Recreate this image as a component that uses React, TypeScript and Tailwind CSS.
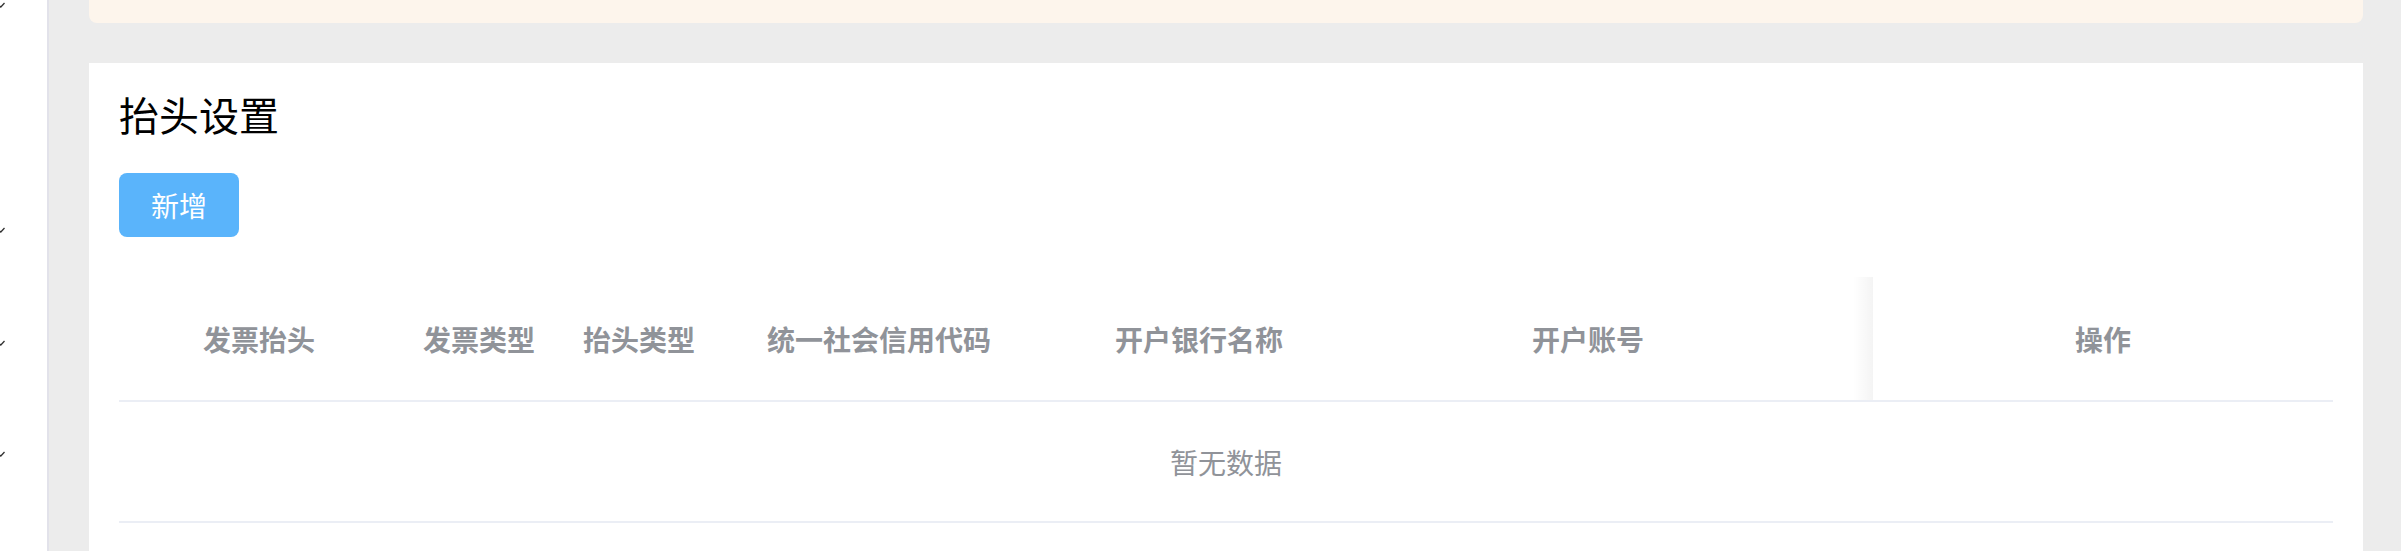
import React from "react";

const cjk = { fontFamily: '"Noto Sans CJK SC", "Noto Sans", sans-serif' };

function Tick() {
  return (
    <svg width="6" height="6" viewBox="0 0 6 6" className="block">
      <polyline points="-1,3.5 0.8,5 4.5,1" fill="none" stroke="#333" strokeWidth="1.3" />
    </svg>
  );
}

export default function App() {
  const cols: { label: string; w: string }[] = [
    { label: "发票抬头", w: "w-[280px]" },
    { label: "发票类型", w: "w-[160px]" },
    { label: "抬头类型", w: "w-[160px]" },
    { label: "统一社会信用代码", w: "w-[320px]" },
    { label: "开户银行名称", w: "w-[320px]" },
    { label: "开户账号", w: "w-[458px]" },
  ];
  return (
    <div className="flex w-[2401px] h-[551px] overflow-hidden" style={cjk}>
      <aside className="w-[49px] shrink-0 bg-white border-r-2 border-[#e2e2ea] flex flex-col">
        <div className="mt-[2px]"><Tick /></div>
        <div className="mt-[219px]"><Tick /></div>
        <div className="mt-[107px]"><Tick /></div>
        <div className="mt-[105px]"><Tick /></div>
      </aside>
      <main className="flex-1 bg-[#ececec] pl-[40px] pr-[38px] flex flex-col">
        <div className="h-[23px] shrink-0 rounded-b-[8px] bg-[#fdf5ec]" />
        <section className="mt-[40px] flex-1 bg-white px-[30px] pt-[31px]">
          <h2 className="text-[40px] leading-[40px] text-black font-normal">抬头设置</h2>
          <button className="mt-[39px] w-[120px] h-[64px] rounded-[8px] bg-[#5ab4fb] text-white text-[28px] leading-none">
            新增
          </button>
          <div className="mt-[40px]">
            <div className="flex h-[125px] border-b-2 border-[#ebeef5]">
              {cols.map((c) => (
                <div
                  key={c.label}
                  className={`${c.w} shrink-0 flex items-center justify-center text-[28px] font-bold text-[#909399]`}
                >
                  {c.label}
                </div>
              ))}
              <div className="flex-1" />
              <div className="relative w-[460px] shrink-0 flex items-center justify-center text-[28px] font-bold text-[#909399] bg-white">
                <div className="absolute right-full top-0 h-full w-[20px] bg-gradient-to-r from-transparent to-[rgba(0,0,0,0.045)]" />
                操作
              </div>
            </div>
            <div className="h-[121px] border-b-2 border-[#ebeef5] flex items-center justify-center text-[28px] text-[#909399]">
              暂无数据
            </div>
          </div>
        </section>
      </main>
    </div>
  );
}
